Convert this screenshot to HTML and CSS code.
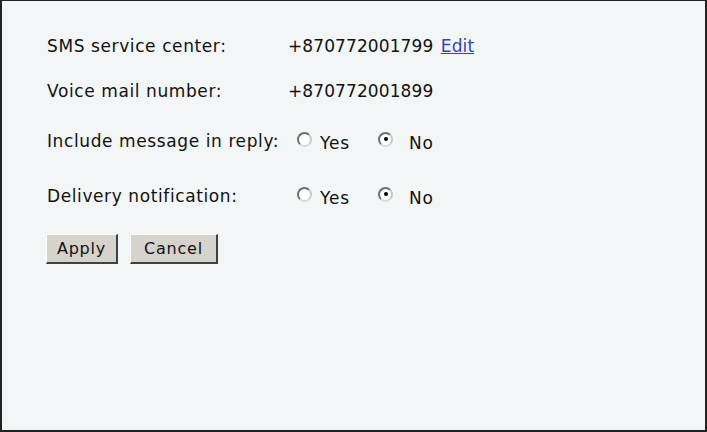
FILE: index.html
```html
<!DOCTYPE html>
<html>
<head>
<meta charset="utf-8">
<link rel="stylesheet" href="styles.css">
</head>
<body>
<div class="frame">
  <div class="form">
    <div class="row r1">
      <div class="label">SMS service center:</div>
      <div class="value">+870772001799 <a href="#" class="edit">Edit</a></div>
    </div>
    <div class="row r2">
      <div class="label">Voice mail number:</div>
      <div class="value">+870772001899</div>
    </div>
    <div class="row r3">
      <div class="label">Include message in reply:</div>
      <div class="value radios">
        <span class="opt"><span class="radio"></span><span class="yes">Yes</span></span>
        <span class="opt"><span class="radio checked"></span><span class="no">No</span></span>
      </div>
    </div>
    <div class="row r4">
      <div class="label">Delivery notification:</div>
      <div class="value radios">
        <span class="opt"><span class="radio"></span><span class="yes">Yes</span></span>
        <span class="opt"><span class="radio checked"></span><span class="no">No</span></span>
      </div>
    </div>
    <div class="buttons">
      <button class="btn apply">Apply</button>
      <button class="btn cancel">Cancel</button>
    </div>
  </div>
</div>
</body>
</html>
```
FILE: styles.css
```css
html, body {
  margin: 0;
  padding: 0;
  background: #222222;
}
.frame {
  box-sizing: border-box;
  width: 707px;
  height: 432px;
  background: #f3f6f7;
  border-top: 1px solid #222;
  border-left: 2px solid #222;
  border-right: 2px solid #222;
  border-bottom: 2px solid #222;
  font-family: "DejaVu Sans", Verdana, sans-serif;
  font-size: 17px;
  color: #111;
}
.form {
  padding: 34px 0 0 45px;
  display: flex;
  flex-direction: column;
}
.row {
  display: flex;
  align-items: center;
  height: 22px;
}
.label {
  width: 241px;
  letter-spacing: 0.6px;
}
.value {
  letter-spacing: 0.1px;
}
.r2 { margin-top: 23px; }
.r3 { margin-top: 28px; }
.r4 { margin-top: 33px; }
.edit {
  color: #2d44b9;
  text-decoration: underline;
  margin-left: 2px;
}
.radios {
  display: flex;
  align-items: center;
}
.opt {
  display: flex;
  align-items: center;
}
.opt:first-child {
  margin-left: 9px;
  width: 81px;
}
.radio {
  display: inline-block;
  box-sizing: border-box;
  width: 15px;
  height: 15px;
  border-radius: 50%;
  border: 2px solid #6e6e6e;
  border-right-color: #c8c8c8;
  border-bottom-color: #dadada;
  background: #fff;
  position: relative;
  margin-top: -4px;
}
.radio.checked::after {
  content: "";
  position: absolute;
  left: 3.5px;
  top: 3.5px;
  width: 4px;
  height: 4px;
  border-radius: 50%;
  background: #000;
}
.yes {
  margin-left: 8px;
  margin-top: 4px;
  letter-spacing: 0.8px;
}
.no {
  margin-left: 16px;
  margin-top: 4px;
  letter-spacing: 0.8px;
}
.buttons {
  margin-top: 27px;
  display: flex;
  gap: 12px;
  margin-left: -1px;
}
.btn {
  font-family: "DejaVu Sans", Verdana, sans-serif;
  font-size: 16px;
  color: #111;
  background: #d6d3cc;
  border-top: 1px solid #ffffff;
  border-left: 1px solid #ffffff;
  border-right: 2px solid #404040;
  border-bottom: 2px solid #404040;
  height: 30px;
  padding: 0;
  letter-spacing: 0.8px;
}
.apply { width: 72px; }
.cancel { width: 88px; }
```
